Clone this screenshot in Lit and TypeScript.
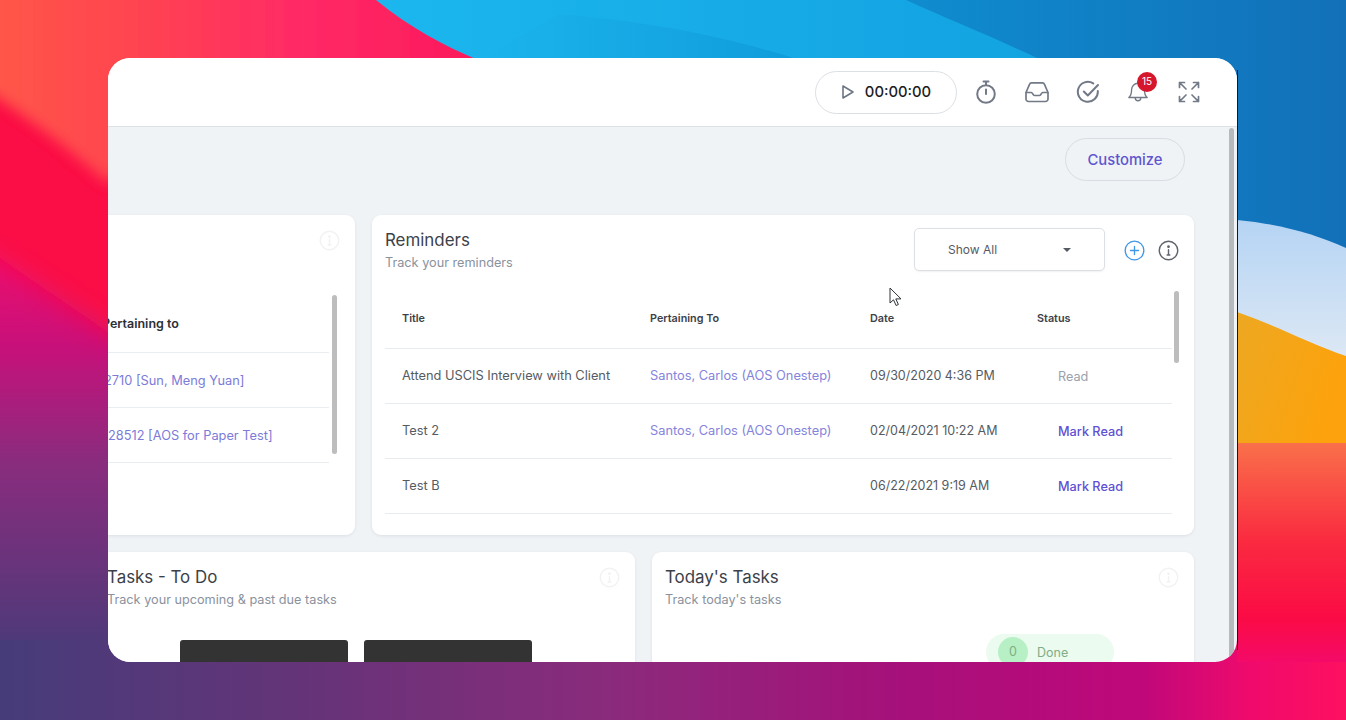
import { LitElement, html, css, svg } from 'lit';
import { customElement } from 'lit/decorators.js';

const wallpaper = svg`
  <svg class="wallpaper" viewBox="0 0 1346 720" preserveAspectRatio="none">
    <defs>
      <filter id="soft" x="-20%" y="-20%" width="140%" height="140%">
        <feGaussianBlur stdDeviation="7" />
      </filter>
      <filter id="softer" x="-30%" y="-30%" width="160%" height="160%">
        <feGaussianBlur stdDeviation="14" />
      </filter>
      <linearGradient id="base" x1="0" y1="0" x2="0" y2="1">
        <stop offset="0.13" stop-color="#fb0f45" />
        <stop offset="0.3" stop-color="#f80f55" />
        <stop offset="0.37" stop-color="#e80f70" />
        <stop offset="0.48" stop-color="#c8107a" />
        <stop offset="0.64" stop-color="#8a2c7e" />
        <stop offset="0.92" stop-color="#483b78" />
      </linearGradient>
      <linearGradient id="coral" x1="0" y1="0" x2="1" y2="0">
        <stop offset="0" stop-color="#ff5a48" />
        <stop offset="0.3" stop-color="#ff4450" />
        <stop offset="0.6" stop-color="#ff2a66" />
        <stop offset="1" stop-color="#fb1558" />
      </linearGradient>
      <linearGradient id="blue" x1="0" y1="0" x2="1" y2="0">
        <stop offset="0" stop-color="#1cb7ee" />
        <stop offset="0.55" stop-color="#14a6e4" />
        <stop offset="1" stop-color="#109cda" />
      </linearGradient>
      <linearGradient id="wave" x1="0" y1="0" x2="1" y2="0">
        <stop offset="0" stop-color="#1bb4ec" />
        <stop offset="1" stop-color="#109cdc" />
      </linearGradient>
      <linearGradient id="deep" x1="0" y1="0" x2="1" y2="0">
        <stop offset="0" stop-color="#0f8ccf" />
        <stop offset="1" stop-color="#1270b8" />
      </linearGradient>
      <linearGradient id="floor" gradientUnits="userSpaceOnUse" x1="0" y1="0" x2="1346" y2="0">
        <stop offset="0" stop-color="#463c7a" />
        <stop offset="0.22" stop-color="#643478" />
        <stop offset="0.45" stop-color="#8a2b7c" />
        <stop offset="0.67" stop-color="#a6107a" />
        <stop offset="0.85" stop-color="#c0087a" />
        <stop offset="0.93" stop-color="#f00a6c" />
        <stop offset="1" stop-color="#fe1060" />
      </linearGradient>
      <linearGradient id="sky" x1="0" y1="0" x2="0" y2="1">
        <stop offset="0" stop-color="#b5d4f4" />
        <stop offset="1" stop-color="#dde8f4" />
      </linearGradient>
      <linearGradient id="gold" x1="0" y1="0" x2="1" y2="0.4">
        <stop offset="0" stop-color="#eda822" />
        <stop offset="1" stop-color="#fda20c" />
      </linearGradient>
      <linearGradient id="dune" x1="0" y1="0" x2="0" y2="1">
        <stop offset="0" stop-color="#f9704a" />
        <stop offset="0.45" stop-color="#fa2a40" />
        <stop offset="0.8" stop-color="#fb0b45" />
        <stop offset="1" stop-color="#f40a68" />
      </linearGradient>
    </defs>
    <rect width="1346" height="720" fill="url(#base)" />
    <path d="M-30 80 H160 V345 L108 332 L0 258 L-30 240 Z" fill="#fb0f45" filter="url(#softer)" />
    <path d="M-30 -30 H520 V100 H230 C170 120 130 160 108 184 C70 150 30 118 -30 80 Z" fill="url(#coral)" filter="url(#soft)" />
    <path d="M376 0 C410 28 445 46 478 60 V100 H1346 V0 Z" fill="url(#blue)" />
    <path d="M560 14 C620 20 700 28 800 60 V100 H478 V60 Z" fill="url(#wave)" />
    <path d="M906 0 C950 20 1000 40 1041 60 V260 H1346 V0 Z" fill="url(#deep)" />
    <path d="M1237 220 C1280 224 1315 234 1346 248 V360 H1237 Z" fill="url(#sky)" />
    <path d="M1237 312 C1275 325 1310 344 1346 356 V446 H1237 Z" fill="url(#gold)" />
    <rect x="0" y="640" width="1237" height="80" fill="url(#floor)" />
    <rect x="1237" y="443" width="109" height="219" fill="url(#dune)" />
    <rect x="1237" y="662" width="109" height="58" fill="url(#floor)" />
  </svg>
`;

const infoIcon = html`<svg viewBox="0 0 22 22" width="21" height="21" fill="none" stroke="currentColor" stroke-width="1.5" stroke-linecap="round">
  <circle cx="11" cy="11" r="9.7" />
  <path d="M11 10.200v5.600M9.600 15.800h2.800" />
  <circle cx="11" cy="7" r=".7" fill="currentColor" />
</svg>`;

@customElement('app-root')
export class AppRoot extends LitElement {
  render() {
    return html`
      ${wallpaper}
      <main class="window">
        <header class="topbar">
          <button class="timer">
            <svg viewBox="0 0 14 16" width="14" height="16" fill="none" stroke="#6d7685" stroke-width="1.6" stroke-linejoin="round">
              <path d="M2 2v12l10-6z" />
            </svg>
            <span>00:00:00</span>
          </button>
          <svg class="ico" viewBox="0 0 24 24" fill="none" stroke="#737a87" stroke-width="2" stroke-linecap="round">
            <path d="M9.500 1.500h5M12 1.500v3" />
            <circle cx="12" cy="14" r="8.800" />
            <path d="M12 9.500V14" />
          </svg>
          <svg class="ico" viewBox="0 0 24 24" fill="none" stroke="#737a87" stroke-width="1.700" stroke-linejoin="round" stroke-linecap="round">
            <path d="M6.500 2.800h11a2 2 0 0 1 1.900 1.300L23 12.500V19a2.500 2.500 0 0 1-2.500 2.500h-17A2.500 2.500 0 0 1 1 19v-6.500l3.600-8.400a2 2 0 0 1 1.900-1.300z" />
            <path d="M1.200 12.500h5.300c1 0 1.300 3 3 3h5c1.700 0 2-3 3-3h5.300" />
          </svg>
          <svg class="ico" viewBox="0 0 24 24" fill="none" stroke="#737a87" stroke-width="2" stroke-linecap="round" stroke-linejoin="round">
            <path d="M21.800 11a10 10 0 1 1-4.600-7.600" />
            <path d="M7.800 11.500l4 4L22 5" />
          </svg>
          <div class="bell">
            <svg class="ico" viewBox="0 0 24 24" fill="none" stroke="#737a87" stroke-width="1.500" stroke-linecap="round" stroke-linejoin="round">
              <path d="M12 2.500a7 7 0 0 0-7 7c0 5-1.200 7-3 8.500h20c-1.800-1.500-3-3.500-3-8.500a7 7 0 0 0-7-7z" />
              <path d="M9 18.500a3 3 0 0 0 6 0" />
            </svg>
            <span class="badge">15</span>
          </div>
          <svg class="ico" viewBox="0 0 24 24" fill="none" stroke="#737a87" stroke-width="1.700" stroke-linecap="round" stroke-linejoin="round">
            <path d="M2.500 7.500v-5h5M2.500 2.500l6.500 6.500M16.500 2.500h5v5M21.500 2.500L15 9M2.500 16.500v5h5M2.500 21.500L9 15M21.500 16.500v5h-5M21.500 21.500L15 15" />
          </svg>
        </header>

        <section class="content">
          <div class="actions"><button class="customize">Customize</button></div>

          <div class="row first">
            <article class="card">
              <div class="faint-info">${infoIcon}</div>
              <div class="list-wrap">
                <div class="list">
                  <div class="list-head">Pertaining to</div>
                  <div class="list-row">2710 [Sun, Meng Yuan]</div>
                  <div class="list-row">28512 [AOS for Paper Test]</div>
                </div>
                <div class="scroll tall"></div>
              </div>
            </article>

            <article class="card reminders">
              <div class="card-head">
                <div>
                  <h2>Reminders</h2>
                  <p>Track your reminders</p>
                </div>
                <div class="tools">
                  <div class="select"><span>Show All</span><i class="caret"></i></div>
                  <svg class="plus" viewBox="0 0 22 22" width="21" height="21" fill="none" stroke="#3f97e6" stroke-width="1.400" stroke-linecap="round">
                    <circle cx="11" cy="11" r="9.800" />
                    <path d="M11 6.800v8.400M6.800 11h8.400" />
                  </svg>
                  <span class="info">${infoIcon}</span>
                </div>
              </div>
              <div class="table-wrap">
                <div class="table">
                  <div class="tr th"><span>Title</span><span>Pertaining To</span><span>Date</span><span>Status</span></div>
                  <div class="tr">
                    <span>Attend USCIS Interview with Client</span>
                    <span class="link">Santos, Carlos (AOS Onestep)</span>
                    <span class="date">09/30/2020 4:36 PM</span>
                    <span class="read">Read</span>
                  </div>
                  <div class="tr">
                    <span>Test 2</span>
                    <span class="link">Santos, Carlos (AOS Onestep)</span>
                    <span class="date">02/04/2021 10:22 AM</span>
                    <span class="mark">Mark Read</span>
                  </div>
                  <div class="tr">
                    <span>Test B</span>
                    <span></span>
                    <span class="date">06/22/2021 9:19 AM</span>
                    <span class="mark">Mark Read</span>
                  </div>
                </div>
                <div class="scroll short"></div>
              </div>
            </article>
          </div>

          <div class="row second">
            <article class="card tasks">
              <div class="faint-info">${infoIcon}</div>
              <h2>Tasks - To Do</h2>
              <p>Track your upcoming &amp; past due tasks</p>
              <div class="blocks"><div></div><div></div></div>
            </article>
            <article class="card today">
              <div class="faint-info">${infoIcon}</div>
              <h2>Today's Tasks</h2>
              <p>Track today's tasks</p>
              <div class="done-wrap">
                <div class="done"><b>0</b><span>Done</span></div>
              </div>
            </article>
          </div>
          <div class="page-scroll"></div>
        </section>

        <svg class="cursor" viewBox="0 0 14 20" width="14" height="20">
          <path d="M1 1v15l3.500-3.200 2.600 5.700 2.300-1-2.600-5.600H12z" fill="#fff" stroke="#30343a" stroke-width="1" stroke-linejoin="round" />
        </svg>
      </main>
    `;
  }

  static styles = css`
    :host {
      display: block;
      position: relative;
      width: 1346px;
      height: 720px;
      overflow: hidden;
      padding: 58px 109px 58px 108px;
      box-sizing: border-box;
      font-family: Inter, 'Liberation Sans', sans-serif;
      color: #3c4149;
    }

    :host::after {
      content: '';
      position: absolute;
      left: 1237px;
      top: 70px;
      bottom: 70px;
      width: 1px;
      background: #16181c;
    }

    .wallpaper {
      position: absolute;
      inset: 0;
      width: 100%;
      height: 100%;
    }

    .window {
      position: relative;
      height: 604px;
      border-radius: 22px;
      overflow: hidden;
      background: #eff3f6;
    }

    .topbar {
      height: 69px;
      box-sizing: border-box;
      display: flex;
      align-items: center;
      justify-content: flex-end;
      gap: 27px;
      padding: 0 36px 0 0;
      background: #fff;
      border-bottom: 1px solid #dfe2e5;
    }

    .timer {
      width: 142px;
      height: 43px;
      margin-right: -10px;
      display: flex;
      align-items: center;
      justify-content: center;
      gap: 10px;
      background: #fff;
      border: 1px solid #dcdfe4;
      border-radius: 22px;
      font: 500 14.800px Inter, sans-serif;
      color: #1c1c1e;
    }

    .ico {
      width: 24px;
      height: 24px;
    }

    .bell {
      position: relative;
      width: 24px;
      height: 24px;
      margin-right: -1px;
    }

    .bell .ico {
      width: 22px;
      height: 22px;
      margin-top: 1px;
    }

    .badge {
      position: absolute;
      top: -8px;
      left: 10px;
      width: 20px;
      height: 20px;
      border-radius: 50%;
      background: #d5162c;
      color: #fff;
      font-size: 10px;
      line-height: 19px;
      text-align: center;
    }

    .content {
      position: relative;
      height: 535px;
      overflow: hidden;
    }

    .page-scroll {
      position: absolute;
      top: 1px;
      right: 3px;
      bottom: 0;
      width: 5px;
      background: #b7babd;
      border-radius: 3px;
    }

    .actions {
      display: flex;
      justify-content: flex-end;
      padding: 11px 52px 34px 0;
    }

    .customize {
      width: 120px;
      height: 43px;
      border: 1px solid #d9dde3;
      border-radius: 22px;
      background: transparent;
      font: 500 14.800px Inter, sans-serif;
      color: #5f55cf;
    }

    .row {
      display: grid;
      gap: 17px;
      margin-left: -200px;
      width: 1286px;
    }

    .first {
      grid-template-columns: 447px 822px;
      height: 320px;
      margin-bottom: 17px;
    }

    .second {
      grid-template-columns: 727px 542px;
    }

    .card {
      position: relative;
      background: #fff;
      border-radius: 9px;
      box-shadow: 0 1px 3px rgba(60, 70, 90, 0.1);
    }

    .faint-info {
      position: absolute;
      top: 15px;
      right: 15px;
      color: #f0f2f4;
    }

    .list-wrap {
      position: absolute;
      top: 80px;
      right: 18px;
      left: 0;
      display: flex;
      gap: 3px;
    }

    .list {
      flex: 1;
    }

    .list-head {
      height: 57px;
      display: flex;
      align-items: center;
      padding-left: 194px;
      font-weight: 600;
      font-size: 12.500px;
      color: #2c3038;
      border-bottom: 1px solid #e9edf0;
    }

    .list-row {
      height: 54px;
      display: flex;
      align-items: center;
      padding-left: 196px;
      font-size: 12.800px;
      color: #7c7bd8;
      border-bottom: 1px solid #e9edf0;
    }

    .list-row:last-child {
      padding-left: 200px;
    }

    .scroll {
      width: 5px;
      flex: none;
      border-radius: 3px;
      background: #bdbdbd;
    }

    .tall {
      height: 159px;
    }

    .short {
      height: 72px;
      margin-left: 2px;
    }

    .reminders {
      padding: 14px 15px 0 13px;
    }

    .card-head {
      display: flex;
      justify-content: space-between;
    }

    h2 {
      margin: 0;
      font-size: 16.900px;
      font-weight: 400;
      color: #3c4149;
      line-height: 22px;
    }

    p {
      margin: 4px 0 0;
      font-size: 12.700px;
      color: #8a929e;
    }

    .tools {
      display: flex;
      align-items: center;
      gap: 19px;
    }

    .select {
      width: 191px;
      height: 43px;
      margin-top: -1px;
      box-sizing: border-box;
      padding: 0 33px;
      display: flex;
      align-items: center;
      justify-content: space-between;
      border: 1px solid #dcdfe3;
      border-radius: 5px;
      font-size: 12px;
      color: #555b63;
      box-shadow: 0 1px 2px rgba(0, 0, 0, 0.06);
    }

    .caret {
      border: 4px solid transparent;
      border-top: 4px solid #555b63;
      border-bottom: 0;
    }

    .info {
      display: flex;
      color: #60656d;
      margin-left: -6px;
    }

    .table-wrap {
      display: flex;
      margin-top: 20px;
    }

    .table {
      width: 787px;
      flex: none;
    }

    .tr {
      display: grid;
      grid-template-columns: 248px 220px 167px 1fr;
      align-items: center;
      height: 55px;
      box-sizing: border-box;
      padding: 0 0 2px 17px;
      font-size: 12.800px;
      color: #555b63;
      border-bottom: 1px solid #e9ecef;
    }

    .th {
      height: 58px;
      padding-bottom: 2px;
      font-size: 10.800px;
      font-weight: 600;
      color: #3c4149;
    }

    .date {
      font-size: 12.500px;
    }

    .link {
      color: #8584dc;
    }

    .read {
      padding: 2px 0 0 21px;
      font-size: 12.700px;
      color: #9aa1ac;
    }

    .mark {
      padding: 2px 0 0 21px;
      font-size: 12.700px;
      font-weight: 500;
      color: #5f50d4;
    }

    .tasks {
      padding: 14px 0 0 199px;
      height: 140px;
    }

    .today {
      padding: 14px 0 0 13px;
      height: 140px;
    }

    .blocks {
      display: flex;
      gap: 16px;
      margin: 33px 0 0 73px;
    }

    .blocks div {
      width: 168px;
      height: 60px;
      border-radius: 3px;
      background: #333;
    }

    .done-wrap {
      display: flex;
      justify-content: flex-end;
      padding: 27px 80px 0 0;
    }

    .done {
      width: 128px;
      height: 36px;
      display: flex;
      align-items: center;
      gap: 9px;
      box-sizing: border-box;
      padding-left: 12px;
      background: #ecfbef;
      border-radius: 18px;
      font-size: 12.500px;
      color: #7fae86;
    }

    .done b {
      width: 30px;
      height: 30px;
      border-radius: 50%;
      background: #b7f0c4;
      font-weight: 400;
      text-align: center;
      line-height: 30px;
    }

    .cursor {
      position: absolute;
      left: 781px;
      top: 229px;
    }
  `;
}
